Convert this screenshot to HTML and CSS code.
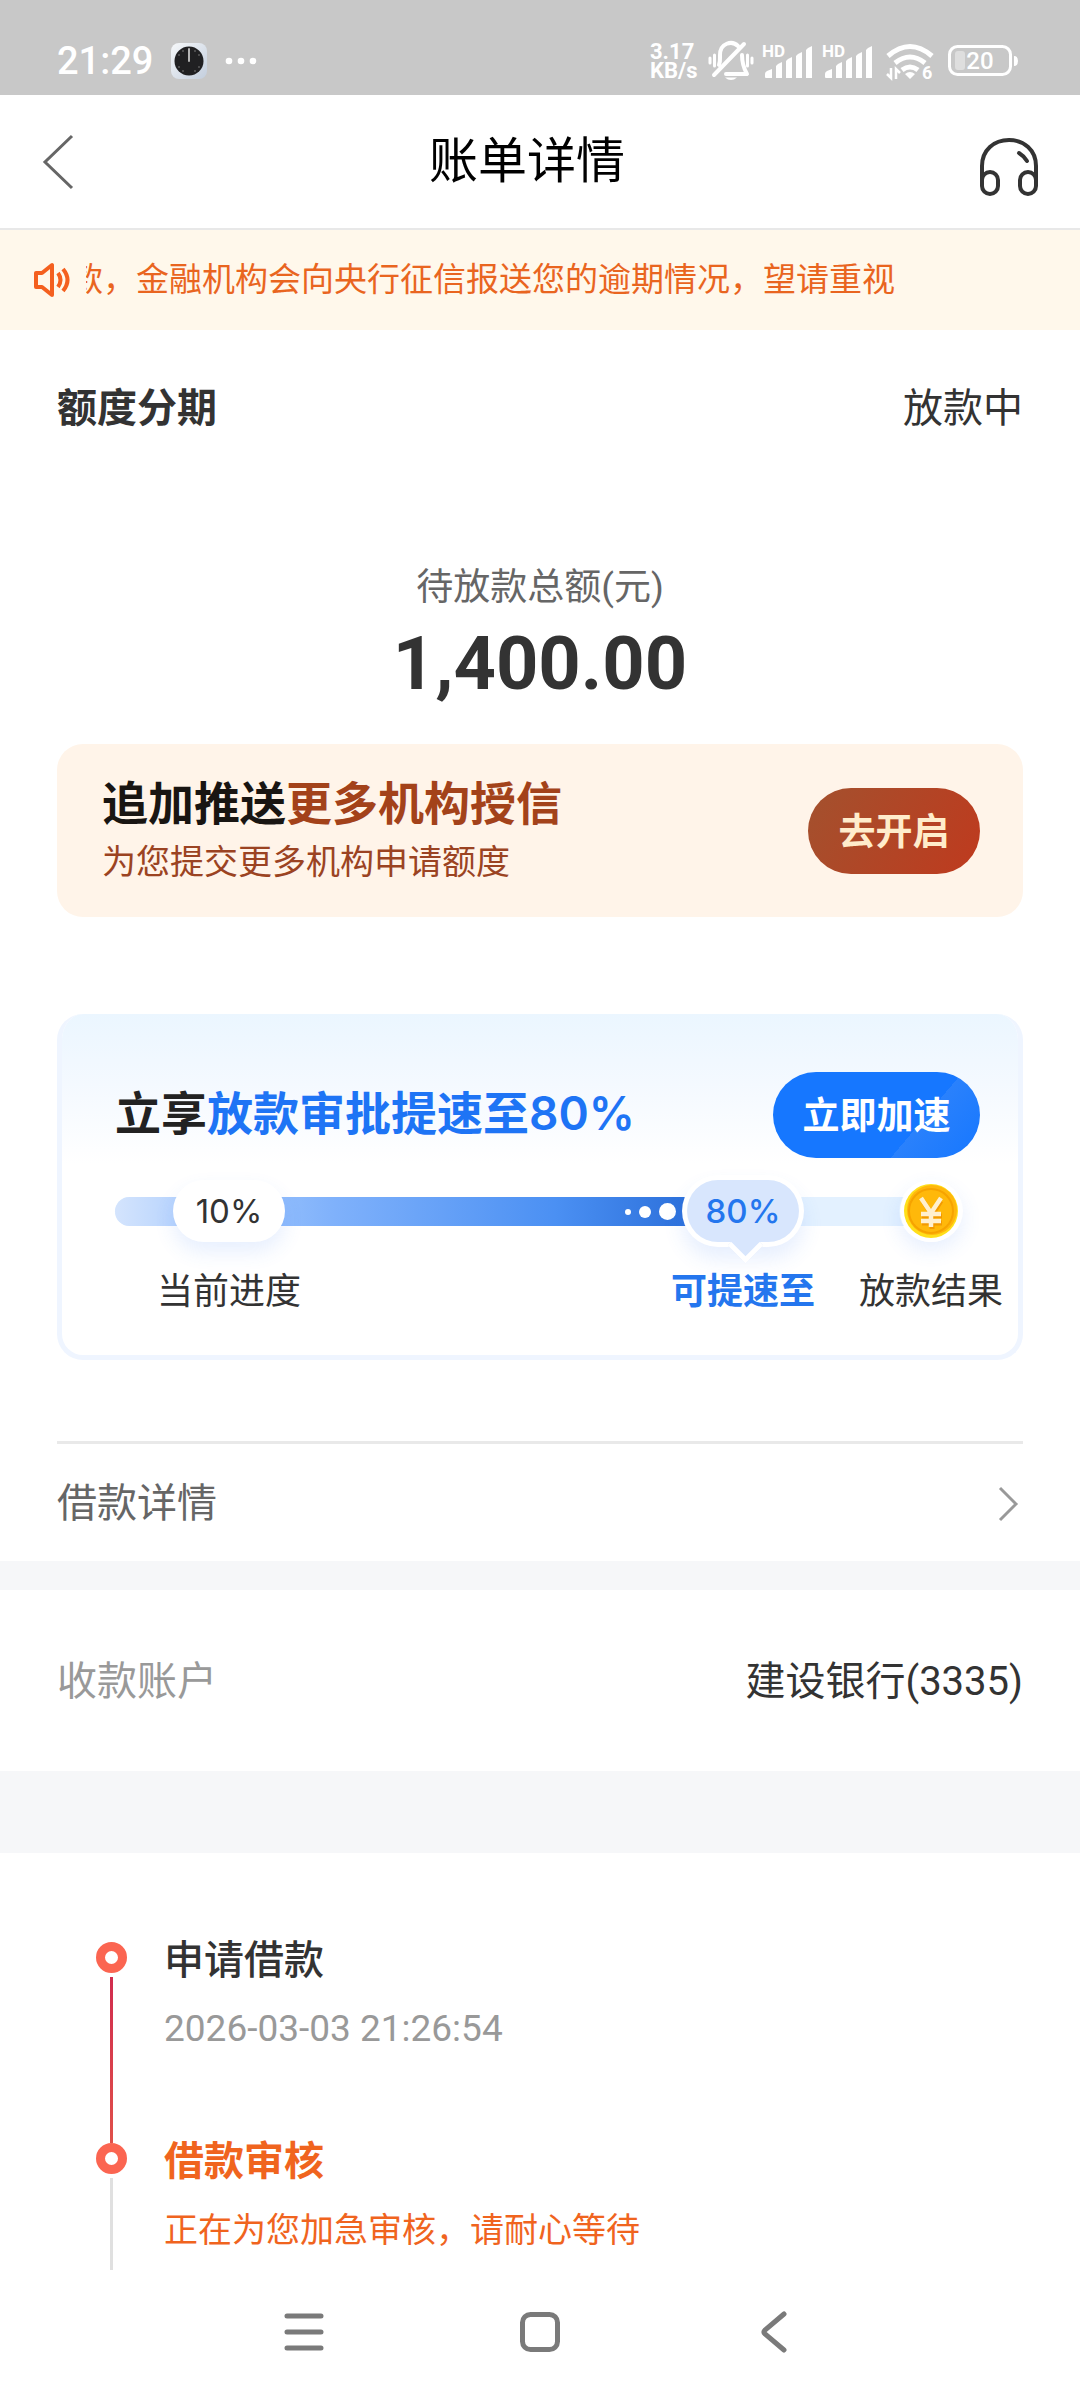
FILE: index.html
```html
<!DOCTYPE html>
<html lang="zh-CN">
<head>
<meta charset="utf-8">
<meta name="viewport" content="width=device-width, initial-scale=1">
<title>账单详情</title>
<link rel="stylesheet" href="styles.css">
</head>
<body>
<div class="status">
  <div class="status-side">
    <span class="clock">21:29</span>
    <svg class="app-icon" width="36" height="36" viewBox="0 0 36 36" aria-hidden="true">
      <defs><linearGradient id="tile" x1="0" y1="0" x2="1" y2="1"><stop offset="0" stop-color="#f6f8fa"/><stop offset="1" stop-color="#c3cedd"/></linearGradient></defs>
      <rect width="36" height="36" rx="8" fill="url(#tile)"/>
      <circle cx="18" cy="18" r="14.5" fill="#202022"/>
      <path d="M18 6v12" stroke="#b5b5b5" stroke-width="2" stroke-linecap="round"/>
      <g fill="#999"><circle cx="24" cy="8" r=".7"/><circle cx="28" cy="12" r=".7"/><circle cx="28" cy="24" r=".7"/><circle cx="24" cy="28" r=".7"/><circle cx="12" cy="28" r=".7"/><circle cx="8" cy="24" r=".7"/><circle cx="8" cy="12" r=".7"/><circle cx="12" cy="8" r=".7"/></g>
    </svg>
    <svg width="32" height="8" viewBox="0 0 32 8" fill="#fff" aria-hidden="true"><circle cx="4" cy="4" r="3.3"/><circle cx="16" cy="4" r="3.3"/><circle cx="28" cy="4" r="3.3"/></svg>
  </div>
  <div class="status-icons">
    <span class="speed">3.17<br>KB/s</span>
    <svg width="46" height="40" viewBox="0 0 46 40" fill="none" stroke="#fff" stroke-linecap="round" aria-hidden="true">
      <path d="M2 17v5M6.500 14v11M39.500 14v11M44 17v5" stroke-width="3"/>
      <path d="M11 24c1.500-4 1-7 1-10C12 2 24-1 30 5M34 14c0 8 1 12 5 19H18" stroke-width="4" stroke-linejoin="round"/>
      <path d="M6 34L36 3" stroke-width="4"/>
      <path d="M17 36.500h12q-6 5-12 0z" fill="#fff" stroke="none"/>
    </svg>
    <svg width="52" height="40" viewBox="0 0 52 40" fill="#fff" aria-hidden="true">
      <text x="0" y="16" class="hd">HD</text>
      <path d="M3 36v-3q0-2 2-3l5-2v9H4q-1 0-1-1zM14 37V25l2-2 4-2v16zM24 37V20l2-2 4-2v21zM34 37V15l2-2 4-2v26zM44 37V9l2-2 4-2v32z"/>
    </svg>
    <svg width="52" height="40" viewBox="0 0 52 40" fill="#fff" aria-hidden="true">
      <text x="0" y="16" class="hd">HD</text>
      <path d="M3 36v-3q0-2 2-3l5-2v9H4q-1 0-1-1zM14 37V25l2-2 4-2v16zM24 37V20l2-2 4-2v21zM34 37V15l2-2 4-2v26zM44 37V9l2-2 4-2v32z"/>
    </svg>
    <svg class="wifi" width="48" height="40" viewBox="0 0 48 40" fill="none" stroke="#fff" aria-hidden="true">
      <path d="M2 15Q24-4 46 15M9 22q15-12 30 0M16 29q8-6 16 0" stroke-width="5"/>
      <path d="M24 38l-5-5q5-4 10 0z" fill="#fff" stroke="none"/>
      <path d="M5 27v10l-4-4M10 38V28l4 4" stroke-width="2.500"/>
      <text x="36" y="38" class="gen" fill="#fff" stroke="none">6</text>
    </svg>
    <svg class="battery" width="70" height="32" viewBox="0 0 70 32" fill="none" aria-hidden="true">
      <rect x="1.500" y="1.500" width="61" height="28" rx="8" stroke="#fff" stroke-width="3"/>
      <rect x="7" y="6" width="10" height="19" rx="3" fill="#dedede"/>
      <path d="M66 11q4 0 4 5t-4 5z" fill="#fff"/>
      <text x="32" y="24" text-anchor="middle" class="level" fill="#fff">20</text>
    </svg>
  </div>
</div>

<header class="header">
  <button class="icon-button" aria-label="返回">
    <svg width="32" height="56" viewBox="0 0 32 56" fill="none" stroke="#666" stroke-width="3"><path d="M30 2L3 28l27 26"/></svg>
  </button>
  <h1>账单详情</h1>
  <button class="icon-button support" aria-label="客服">
    <svg width="58" height="58" viewBox="0 0 58 58" fill="none" stroke="#333" stroke-width="4" stroke-linecap="round">
      <path d="M2 43V29C2 13 14 3 29 3s27 10 27 26v14"/>
      <rect x="2" y="35" width="16" height="22" rx="8"/><rect x="40" y="35" width="16" height="22" rx="8"/>
      <path d="M39 16q5 3 8 8"/>
    </svg>
  </button>
</header>

<div class="notice">
  <svg width="38" height="36" viewBox="0 0 38 36" fill="none" stroke="#f4601f" stroke-width="4" stroke-linejoin="round" aria-hidden="true">
    <path d="M3 11h6l10-8v30l-10-8H3zM25 11q5 7 0 14M30 7q9 11 0 22"/>
  </svg>
  <div class="marquee"><span>款，金融机构会向央行征信报送您的逾期情况，望请重视</span></div>
</div>

<main>
  <section class="bill">
    <div class="row bill-head"><h2>额度分期</h2><span>放款中</span></div>
    <div class="total">
      <p class="total-label">待放款总额(元)</p>
      <p class="total-value">1,400.00</p>
    </div>
    <div class="push-card">
      <div class="push-text">
        <h3>追加推送<em>更多机构授信</em></h3>
        <p>为您提交更多机构申请额度</p>
      </div>
      <button class="pill open">去开启</button>
    </div>
    <div class="speed-card">
      <div class="speed-head">
        <h3>立享<em>放款审批提速至80%</em></h3>
        <button class="pill boost">立即加速</button>
      </div>
      <div class="steps">
        <div class="track"></div>
        <div class="fill"><i></i><i></i><i></i></div>
        <div class="step step-now"><span class="mark">10%</span><span>当前进度</span></div>
        <div class="step step-next"><span class="mark">80%</span><span>可提速至</span></div>
        <div class="step step-end">
          <svg class="coin" width="64" height="62" viewBox="0 0 64 62" aria-hidden="true">
            <circle cx="32" cy="31" r="31" fill="#fff"/>
            <circle cx="32" cy="31" r="27" fill="#ffdf1a"/>
            <circle cx="33" cy="30" r="25" fill="#ffb70c"/>
            <circle cx="32" cy="31" r="22" fill="#ffb80a" stroke="#f6a300" stroke-width="2"/>
            <path d="M23 19l9 14 9-14M32 33v14M22 34h20M22 41h20" fill="none" stroke="#f39a00" stroke-width="5" transform="translate(1 2)"/>
            <path d="M22 18l10 15 10-15M32 33v14M22 34h20M22 41h20" fill="none" stroke="#fff0cf" stroke-width="4.500"/>
          </svg>
          <span>放款结果</span>
        </div>
      </div>
    </div>
    <a class="row detail" href="#detail">
      <span>借款详情</span>
      <svg width="22" height="36" viewBox="0 0 22 36" fill="none" stroke="#999" stroke-width="3" aria-hidden="true"><path d="M2 2l16 16L2 34"/></svg>
    </a>
  </section>

  <section class="row account"><span class="muted">收款账户</span><span>建设银行(3335)</span></section>

  <ol class="timeline">
    <li>
      <div class="rail"><b></b></div>
      <div><h3>申请借款</h3><p>2026-03-03 21:26:54</p></div>
    </li>
    <li class="current">
      <div class="rail"><b></b></div>
      <div><h3>借款审核</h3><p>正在为您加急审核，请耐心等待</p></div>
    </li>
  </ol>
</main>

<nav class="system-nav">
  <button class="icon-button" aria-label="最近任务"><svg width="44" height="44" viewBox="0 0 44 44" fill="none" stroke="#7a7a7a" stroke-width="5" stroke-linecap="round"><path d="M5 6h34M5 22h34M5 38h34"/></svg></button>
  <button class="icon-button" aria-label="主屏幕"><svg width="44" height="44" viewBox="0 0 44 44" fill="none" stroke="#7a7a7a" stroke-width="5"><rect x="4.500" y="4.500" width="35" height="35" rx="8"/></svg></button>
  <button class="icon-button" aria-label="返回上一页"><svg width="44" height="44" viewBox="0 0 44 44" fill="none" stroke="#7a7a7a" stroke-width="5" stroke-linecap="round"><path d="M30 4L11 20q-2 2 0 4l19 16"/></svg></button>
</nav>
</body>
</html>
```
FILE: styles.css
```css
* {
  box-sizing: border-box;
}

body {
  margin: 0;
  min-height: 100vh;
  display: flex;
  flex-direction: column;
  background: #fff;
  color: #333;
  font-family: Roboto, "Noto Sans CJK SC", sans-serif;
  font-size: 40px;
  line-height: 56px;
}

h1, h2, h3, p, ol {
  margin: 0;
  padding: 0;
}

h2, h3 {
  font-size: 40px;
  font-weight: 500;
}

em {
  font-style: normal;
}

svg {
  display: block;
  flex: none;
  overflow: visible;
}

button {
  border: 0;
  padding: 0;
  font-family: inherit;
  cursor: pointer;
}

.icon-button {
  background: none;
}

/* Status bar */
.status {
  display: flex;
  justify-content: space-between;
  align-items: center;
  height: 95px;
  padding: 26px 62px 0 57px;
  background: #c8c8c8;
  color: #fff;
}

.status-side,
.status-icons {
  display: flex;
  align-items: center;
}

.status-side {
  gap: 18px;
}

.clock {
  font-size: 38px;
  line-height: 40px;
  font-weight: 500;
}

.status-icons {
  gap: 8px;
}

.speed {
  width: 50px;
  font-size: 22px;
  line-height: 19px;
  font-weight: 700;
}

.hd {
  font-size: 17px;
  font-weight: 700;
}

.gen {
  font-size: 18px;
  font-weight: 700;
}

.level {
  font-size: 24px;
  font-weight: 500;
}

.wifi {
  margin-left: 4px;
}

.battery {
  margin-left: 6px;
}

/* Title bar */
.header {
  display: flex;
  justify-content: space-between;
  align-items: center;
  height: 135px;
  padding: 0 42px;
  border-bottom: 2px solid #e8e8e8;
}

.header h1 {
  color: #000;
  font-size: 49px;
  line-height: 64px;
  font-weight: 400;
}

.support {
  padding-top: 8px;
}

/* Scrolling notice */
.notice {
  display: flex;
  align-items: center;
  gap: 15px;
  height: 100px;
  padding: 0 33px;
  background: #fff8eb;
  color: #e9651f;
  font-size: 33px;
}

.marquee {
  flex: 1;
  display: flex;
  overflow: hidden;
  white-space: nowrap;
}

.marquee span {
  margin-left: -16px;
}

/* Bill summary */
.bill {
  padding: 51px 57px 0;
}

.row {
  display: flex;
  justify-content: space-between;
  align-items: center;
}

.bill-head h2 {
  font-weight: 700;
}

.total {
  padding: 123px 0 32px;
  text-align: center;
}

.total-label {
  color: #666;
  font-size: 37px;
}

.total-value {
  font-size: 74px;
  line-height: 96px;
  font-weight: 700;
}

.push-card {
  display: flex;
  justify-content: space-between;
  align-items: center;
  margin-bottom: 97px;
  padding: 0 43px 0 45px;
  border-radius: 26px;
  background: #fff4e9;
}

.push-text {
  padding: 30px 0 27px;
}

.push-card h3 {
  color: #191512;
  font-size: 46px;
  line-height: 60px;
  font-weight: 700;
}

.push-card em {
  color: #a3421a;
}

.push-card p {
  color: #9b4322;
  font-size: 34px;
}

.pill {
  height: 86px;
  padding-bottom: 4px;
  border-radius: 43px;
  font-size: 37px;
  font-weight: 700;
}

.open {
  width: 172px;
  background: linear-gradient(120deg, #a3512e, #bf3a1e);
  color: #ffeccb;
}

.speed-card {
  padding: 58px 15px 41px 53px;
  border: solid #eff5ff;
  border-width: 0 5px 5px;
  border-radius: 26px;
  background: linear-gradient(#ebf6ff, #f4f9ff 70px, #fff 150px) padding-box;
}

.speed-head {
  display: flex;
  justify-content: space-between;
  align-items: center;
  padding-right: 23px;
}

.speed-head h3 {
  padding-bottom: 4px;
  color: #222;
  font-family: Inter, "Noto Sans CJK SC", sans-serif;
  font-size: 46px;
  font-weight: 600;
}

.speed-head em {
  color: #1e74f5;
}

.boost {
  width: 207px;
  background: linear-gradient(130deg, #1677ff 68%, #2a81fc 68%, #1677ff);
  color: #fff;
}

/* Progress steps */
.steps {
  position: relative;
  display: flex;
  margin-top: 22px;
  font-size: 36px;
  line-height: 44px;
}

.track,
.fill {
  position: absolute;
  top: 17px;
  left: 0;
  height: 29px;
  border-radius: 15px;
}

.track {
  right: 72px;
  background: #e3f1ff;
}

.fill {
  right: 260px;
  display: flex;
  align-items: center;
  justify-content: flex-end;
  gap: 8px;
  padding-right: 67px;
  background: linear-gradient(90deg, #d4e4fd, #9cc4fd 20%, #7fb1fb 35%, #4b90f3 70%, #2e72dc 90%);
}

.fill i {
  width: 6px;
  height: 6px;
  border-radius: 50%;
  background: #fff;
}

.fill i:nth-child(2) {
  width: 12px;
  height: 12px;
}

.fill i:nth-child(3) {
  width: 17px;
  height: 17px;
}

.step {
  position: relative;
  display: flex;
  flex-direction: column;
  align-items: center;
  gap: 28px;
}

.step-now {
  width: 228px;
}

.step-next {
  width: 232px;
  margin-left: auto;
  color: #2476ee;
  font-weight: 700;
}

.step-end {
  width: 144px;
}

.coin {
  border-radius: 50%;
  box-shadow: 0 8px 20px rgba(60, 120, 250, .12);
}

.mark {
  position: relative;
  width: 112px;
  height: 62px;
  border-radius: 31px;
  background: #fff;
  box-shadow: 0 10px 20px rgba(60, 120, 250, .12);
  font-family: Inter, sans-serif;
  font-size: 33px;
  line-height: 62px;
  font-weight: 400;
  text-align: center;
}

.step-next .mark {
  background: #d8e6fd;
  box-shadow: 0 0 0 5px #fff, 0 12px 20px 5px rgba(60, 120, 250, .12);
  font-weight: 500;
}

.step-next .mark::after {
  content: "";
  position: absolute;
  left: 46px;
  top: 53px;
  width: 20px;
  height: 20px;
  border: solid #fff;
  border-width: 0 5px 5px 0;
  background: #d8e6fd;
  transform: rotate(45deg);
}

/* Rows */
.detail {
  margin-top: 81px;
  padding: 32px 3px 29px 0;
  border-top: 3px solid #e9e9e9;
  color: #666;
  text-decoration: none;
}

.account {
  padding: 64px 57px 61px;
  border: solid #f6f7f9;
  border-width: 29px 0 82px;
}

.muted {
  color: #999;
}

/* Timeline */
.timeline {
  padding: 80px 57px 0 96px;
  list-style: none;
}

.timeline li {
  display: flex;
  gap: 37px;
  height: 201px;
}

.timeline p {
  margin-top: 12px;
  color: #999;
  font-size: 37px;
}

.rail {
  display: flex;
  flex-direction: column;
  align-items: center;
  width: 31px;
  padding-top: 9px;
}

.rail b {
  flex: none;
  width: 31px;
  height: 31px;
  border: 9px solid #fb6551;
  border-radius: 50%;
}

.rail::after {
  content: "";
  flex: 1;
  width: 3px;
  margin: 4px 0 -9px;
  background: linear-gradient(#d12c4e, #e0504a);
}

.timeline .current {
  height: 136px;
}

.timeline .current h3,
.timeline .current p {
  color: #f0641e;
}

.timeline .current h3 {
  font-weight: 700;
}

.timeline .current p {
  font-size: 34px;
}

.current .rail::after {
  margin-bottom: 0;
  background: #e0e0e0;
}

/* Gesture buttons */
.system-nav {
  display: flex;
  justify-content: center;
  gap: 192px;
  margin-top: auto;
  padding-bottom: 46px;
}
```
